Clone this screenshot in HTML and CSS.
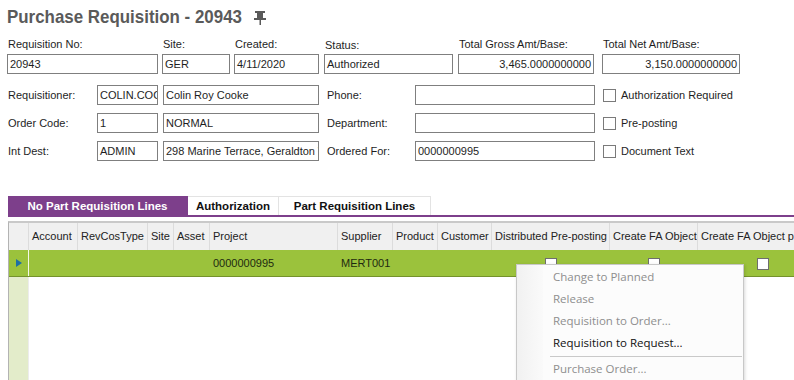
FILE: index.html
```html
<!DOCTYPE html>
<html>
<head>
    <title>Purchase Requisition - 20943</title>
    <link rel="stylesheet" href="styles.css">
</head>
<body>
    <div class="page">
        <h1 class="title"><span class="title-text">Purchase Requisition - 20943</span>
            <svg class="pin" width="12" height="14" viewBox="0 0 12 14">
                <rect x="1" y="0" width="10" height="2" fill="#5a5a5a"/>
                <rect x="3" y="2" width="6" height="5" fill="#5a5a5a"/>
                <rect x="0" y="7" width="12" height="2" fill="#5a5a5a"/>
                <rect x="5.5" y="9" width="1.5" height="5" fill="#5a5a5a"/>
            </svg>
        </h1>

        <div class="head-row">
            <div class="field f-reqno">
                <label>Requisition No:</label>
                <div class="box">20943</div>
            </div>
            <div class="field f-site">
                <label>Site:</label>
                <div class="box">GER</div>
            </div>
            <div class="field f-created">
                <label>Created:</label>
                <div class="box">4/11/2020</div>
            </div>
            <div class="field f-status">
                <label>Status:</label>
                <div class="box">Authorized</div>
            </div>
            <div class="field f-gross">
                <label>Total Gross Amt/Base:</label>
                <div class="box num">3,465.0000000000</div>
            </div>
            <div class="field f-net">
                <label>Total Net Amt/Base:</label>
                <div class="box num">3,150.0000000000</div>
            </div>
        </div>

        <div class="form-grid">
            <label>Requisitioner:</label>
            <div class="box">COLIN.COOKE</div>
            <div class="box wide">Colin Roy Cooke</div>
            <label class="lbl2">Phone:</label>
            <div class="box"></div>
            <div class="check"><span class="cb"></span>Authorization Required</div>

            <label>Order Code:</label>
            <div class="box">1</div>
            <div class="box wide">NORMAL</div>
            <label class="lbl2">Department:</label>
            <div class="box"></div>
            <div class="check"><span class="cb"></span>Pre-posting</div>

            <label>Int Dest:</label>
            <div class="box">ADMIN</div>
            <div class="box wide">298 Marine Terrace, Geraldton WA</div>
            <label class="lbl2">Ordered For:</label>
            <div class="box">0000000995</div>
            <div class="check"><span class="cb"></span>Document Text</div>
        </div>

        <div class="tabs">
            <div class="tab active">No Part Requisition Lines</div>
            <div class="tab t-auth">Authorization</div>
            <div class="tab t-part">Part Requisition Lines</div>
        </div>

        <div class="grid">
            <div class="grid-head">
                <div class="cell ind"></div>
                <div class="cell" style="width:49px">Account</div>
                <div class="cell" style="width:70px">RevCosType</div>
                <div class="cell" style="width:26px">Site</div>
                <div class="cell" style="width:36px">Asset</div>
                <div class="cell" style="width:128px">Project</div>
                <div class="cell" style="width:55px">Supplier</div>
                <div class="cell" style="width:45px">Product</div>
                <div class="cell" style="width:54px">Customer</div>
                <div class="cell" style="width:118px">Distributed Pre-posting</div>
                <div class="cell" style="width:88px">Create FA Object</div>
                <div class="cell" style="width:130px">Create FA Object per Line</div>
            </div>
            <div class="grid-row selected">
                <div class="cell ind"><span class="arrow"></span></div>
                <div class="cell" style="width:49px"></div>
                <div class="cell" style="width:70px"></div>
                <div class="cell" style="width:26px"></div>
                <div class="cell" style="width:36px"></div>
                <div class="cell" style="width:128px">0000000995</div>
                <div class="cell" style="width:55px">MERT001</div>
                <div class="cell" style="width:45px"></div>
                <div class="cell" style="width:54px"></div>
                <div class="cell center" style="width:118px"><span class="cb white"></span></div>
                <div class="cell center" style="width:88px"><span class="cb white"></span></div>
                <div class="cell center" style="width:130px"><span class="cb white"></span></div>
            </div>
            <div class="grid-body">
                <div class="ind-fill"></div>
            </div>
        </div>

        <div class="menu">
            <div class="item disabled">Change to Planned</div>
            <div class="item disabled">Release</div>
            <div class="item disabled">Requisition to Order...</div>
            <div class="item">Requisition to Request...</div>
            <div class="sep"></div>
            <div class="item disabled">Purchase Order...</div>
        </div>
    </div>
</body>
</html>
```

FILE: styles.css
```css
* {
    margin: 0;
    padding: 0;
    box-sizing: border-box;
}

body {
    font-family: "Liberation Sans", Arial, sans-serif;
    font-size: 11px;
    color: #1e1e1e;
    background-color: #ffffff;
    overflow: hidden;
}

.page {
    position: relative;
    width: 794px;
    height: 380px;
    overflow: hidden;
}

/* Title */
.title {
    display: flex;
    align-items: center;
    height: 38px;
    padding: 0 0 4px 7px;
    font-family: "Liberation Sans", Arial, sans-serif;
    font-size: 19px;
    font-weight: bold;
    color: #5a5a5a;
    white-space: nowrap;
}

.title-text {
    display: inline-block;
    transform: scaleX(0.89);
    transform-origin: left center;
    margin-right: -29px;
}

.pin {
    margin: 1px 0 0 12px;
}

/* Input boxes */
.box {
    height: 20px;
    border: 1px solid #7f7f7f;
    padding: 0 2px;
    line-height: 18px;
    white-space: nowrap;
    overflow: hidden;
    text-overflow: clip;
    background: #fff;
}

.box.num {
    text-align: right;
}

label {
    display: block;
    white-space: nowrap;
}

/* First row: labels above boxes */
.head-row {
    display: flex;
    padding-left: 7px;
}

.field label {
    height: 16px;
    padding-left: 1px;
}

.f-reqno { width: 151px; }
.f-site { width: 68px; margin-left: 4px; }
.f-created { width: 85px; margin-left: 4px; }
.f-status { width: 129px; margin-left: 5px; }
.f-gross { width: 136px; margin-left: 5px; }
.f-net { width: 138px; margin-left: 8px; }

.f-status label { padding-top: 1px; }

/* Rows 2-4 */
.form-grid {
    display: grid;
    grid-template-columns: 90px 61px 161px 96px 180px auto;
    row-gap: 8px;
    margin-top: 11px;
    padding-left: 7px;
    align-items: center;
}

.form-grid .box.wide {
    margin-left: 5px;
}

.form-grid label {
    padding-left: 1px;
}

.form-grid .lbl2 {
    padding-left: 8px;
}

.check {
    display: flex;
    align-items: center;
    gap: 5px;
    margin-left: 8px;
    white-space: nowrap;
}

.cb {
    display: inline-block;
    width: 13px;
    height: 13px;
    border: 1px solid #7a7a7a;
    background: #fff;
}

/* Tabs */
.tabs {
    display: flex;
    margin: 35px 0 0 8px;
    height: 21px;
    border-bottom: 2px solid #7d3f8b;
}

.tab {
    height: 19px;
    line-height: 18px;
    font-weight: bold;
    font-size: 11.5px;
    color: #111;
    border-top: 1px solid #e3e3e3;
    border-right: 1px solid #e3e3e3;
    text-align: center;
}

.tab.active {
    width: 180px;
    background: #7d3f8b;
    color: #fff;
    border-color: #7d3f8b;
}

.t-auth { width: 91px; }
.t-part { width: 152px; }

/* Grid */
.grid {
    margin: 4px 0 0 8px;
    width: 900px;
    border-left: 1px solid #b3b3b3;
    border-top: 2px solid #c9c9c9;
    font-size: 11px;
}

.grid-head,
.grid-row {
    display: flex;
    white-space: nowrap;
}

.grid-head {
    height: 27px;
    background: #f0f0f0;
}

.grid-head .cell {
    line-height: 26px;
    border-right: 1px solid #dcdcdc;
    color: #222;
}

.cell {
    flex: none;
    padding-left: 3px;
    overflow: hidden;
}

.cell.ind {
    width: 20px;
    padding: 0;
}

.grid-row.selected {
    height: 27px;
    background: #9bc23c;
    border-bottom: 1px solid #74922c;
}

.grid-row .cell {
    line-height: 26px;
    color: #1e2a10;
}

.grid-row .cell.ind {
    border-right: 1px solid #f4f8e8;
    display: flex;
    align-items: center;
    justify-content: center;
}

.arrow {
    width: 0;
    height: 0;
    border-top: 4px solid transparent;
    border-bottom: 4px solid transparent;
    border-left: 6px solid #1d6fa5;
}

.cell.center {
    display: flex;
    justify-content: center;
    padding: 8px 0 0;
}

.cb.white {
    width: 12px;
    height: 12px;
    border: 1px solid #6e6e6e;
}

.grid-body {
    height: 110px;
}

.ind-fill {
    width: 20px;
    height: 100%;
    background: #e3ecca;
    border-right: 1px solid #ececec;
}

/* Context menu */
.menu {
    position: absolute;
    left: 516px;
    top: 264px;
    width: 228px;
    height: 130px;
    padding: 1px 0 0 0;
    background: linear-gradient(to right, #f1f1f1 0, #fafafa 26px, #fcfcfc 26px);
    border: 1px solid #c8c8c8;
    box-shadow: 1px 1px 3px rgba(0, 0, 0, 0.15);
    font-family: "Open Sans", "Noto Sans", sans-serif;
    font-size: 11.5px;
}

.item {
    height: 22px;
    line-height: 22px;
    padding-left: 36px;
    color: #111;
}

.item.disabled {
    color: #8e8e8e;
}

.sep {
    height: 1px;
    margin: 2px 1px 1px 33px;
    background: #c9c9c9;
}
```
